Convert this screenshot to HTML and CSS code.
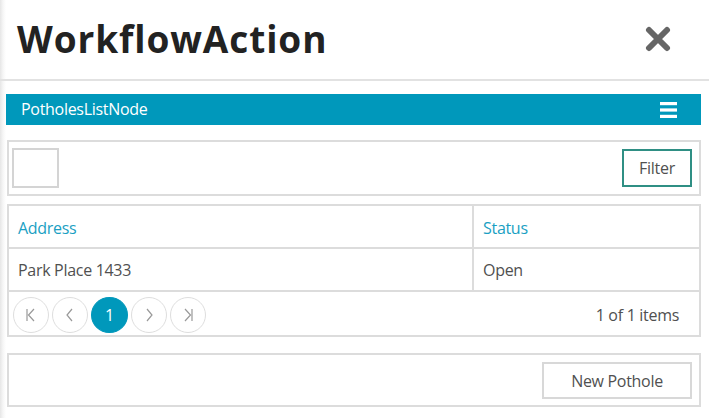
FILE: index.html
```html
<!DOCTYPE html>
<html>
<head>
<meta charset="utf-8">
<link rel="stylesheet" href="styles.css">
</head>
<body>
<div class="dialog">
  <div class="header">
    <h1 class="title">WorkflowAction</h1>
    <button class="close" aria-label="Close">
      <svg width="26" height="26" viewBox="0 0 26 26"><path d="M4 4 L22 22 M22 4 L4 22" stroke="#666" stroke-width="6" stroke-linecap="round"/></svg>
    </button>
  </div>
  <div class="content">
    <div class="panel-bar">
      <span class="panel-title">PotholesListNode</span>
      <svg class="menu" width="17" height="16" viewBox="0 0 17 16"><rect x="0" y="0" width="17" height="3.2" fill="#fff"/><rect x="0" y="6.4" width="17" height="3.2" fill="#fff"/><rect x="0" y="12.8" width="17" height="3.2" fill="#fff"/></svg>
    </div>
    <div class="box toolbar">
      <div class="square"></div>
      <button class="btn btn-filter">Filter</button>
    </div>
    <div class="box grid">
      <div class="row head">
        <div class="cell c1">Address</div>
        <div class="cell c2">Status</div>
      </div>
      <div class="row">
        <div class="cell c1">Park Place 1433</div>
        <div class="cell c2">Open</div>
      </div>
      <div class="pager">
        <div class="pages">
          <span class="pg"><svg width="12" height="14" viewBox="0 0 12 14"><path d="M2 1 V13 M9 1 L3.5 7 L9 13" stroke="#999" stroke-width="1.2" fill="none"/></svg></span>
          <span class="pg"><svg width="10" height="14" viewBox="0 0 10 14"><path d="M7 1 L2 7 L7 13" stroke="#999" stroke-width="1.2" fill="none"/></svg></span>
          <span class="pg active">1</span>
          <span class="pg"><svg width="10" height="14" viewBox="0 0 10 14"><path d="M3 1 L8 7 L3 13" stroke="#999" stroke-width="1.2" fill="none"/></svg></span>
          <span class="pg"><svg width="12" height="14" viewBox="0 0 12 14"><path d="M10 1 V13 M3 1 L8.5 7 L3 13" stroke="#999" stroke-width="1.2" fill="none"/></svg></span>
        </div>
        <span class="count">1 of 1 items</span>
      </div>
    </div>
    <div class="box actions">
      <button class="btn btn-new">New Pothole</button>
    </div>
  </div>
</div>
</body>
</html>
```

FILE: styles.css
```css
html, body {
  margin: 0;
  padding: 0;
}
body {
  width: 709px;
  height: 418px;
  overflow: hidden;
  background: linear-gradient(to right, #e6e6e6 0, #f6f6f6 3px, #fff 6px);
  font-family: "Open Sans", "Noto Sans", sans-serif;
  color: #505050;
}
.dialog {
  display: flex;
  flex-direction: column;
}
.header {
  height: 81px;
  border-bottom: 2px solid #e2e2e2;
  display: flex;
  align-items: center;
  justify-content: space-between;
  padding: 0 38px 0 17px;
  box-sizing: border-box;
}
.title {
  margin: 0;
  font-size: 37px;
  font-weight: 700;
  color: #222;
  letter-spacing: 0.9px;
  line-height: 1;
  padding-bottom: 2px;
}
.close {
  border: 0;
  background: none;
  padding: 0;
  display: flex;
  margin-top: -2px;
}
.content {
  padding: 13px 8px 0 6px;
  display: flex;
  flex-direction: column;
}
.panel-bar {
  height: 31px;
  background: #0098bb;
  display: flex;
  align-items: center;
  justify-content: space-between;
  padding: 0 24px 0 15px;
  box-sizing: border-box;
}
.panel-title {
  color: #fff;
  font-size: 16px;
  letter-spacing: -0.3px;
  margin-top: -2px;
}
.menu {
  margin-top: 1px;
}
.box {
  border: 2px solid #dcdcdc;
  box-sizing: border-box;
  margin-left: 1px;
}
.toolbar {
  margin-top: 15px;
  height: 56px;
  display: flex;
  align-items: center;
  justify-content: space-between;
  padding: 0 7px 0 3px;
}
.square {
  width: 47px;
  height: 40px;
  border: 2px solid #d4d4d4;
  box-sizing: border-box;
}
.btn {
  font-family: "Open Sans", "Noto Sans", sans-serif;
  font-size: 16px;
  color: #505050;
  background: #fff;
  letter-spacing: -0.3px;
  box-sizing: border-box;
  padding: 0;
}
.btn-filter {
  width: 70px;
  height: 38px;
  border: 2px solid #2f8f84;
  margin-top: -1px;
}
.grid {
  margin-top: 8px;
  height: 133px;
  display: flex;
  flex-direction: column;
}
.row {
  display: flex;
  height: 41px;
  border-bottom: 2px solid #dcdcdc;
}
.cell {
  display: flex;
  align-items: center;
  padding-left: 9px;
  font-size: 16px;
  letter-spacing: -0.3px;
  color: #505050;
}
.c1 {
  width: 454px;
  border-right: 2px solid #dcdcdc;
}
.c2 {
  flex: 1;
}
.head .cell {
  color: #1a9fc3;
  padding-top: 3px;
}
.pager {
  flex: 1;
  display: flex;
  align-items: center;
  justify-content: space-between;
  padding: 0 20px 0 4px;
}
.pages {
  display: flex;
  gap: 3px;
  margin-top: 2px;
}
.pg {
  width: 36px;
  height: 36px;
  border: 1.5px solid #dedede;
  border-radius: 50%;
  box-sizing: border-box;
  display: flex;
  align-items: center;
  justify-content: center;
  font-size: 16px;
}
.pg.active {
  background: #0098bb;
  border-color: #0098bb;
  color: #fff;
  width: 37px;
}
.count {
  font-size: 16px;
  letter-spacing: -0.3px;
  color: #505050;
  margin-top: 2px;
}
.actions {
  margin-top: 16px;
  height: 54px;
  display: flex;
  align-items: center;
  justify-content: flex-end;
  padding-right: 7px;
}
.btn-new {
  width: 150px;
  height: 37px;
  border: 2px solid #d8d8d8;
  margin-top: 1px;
}
```
